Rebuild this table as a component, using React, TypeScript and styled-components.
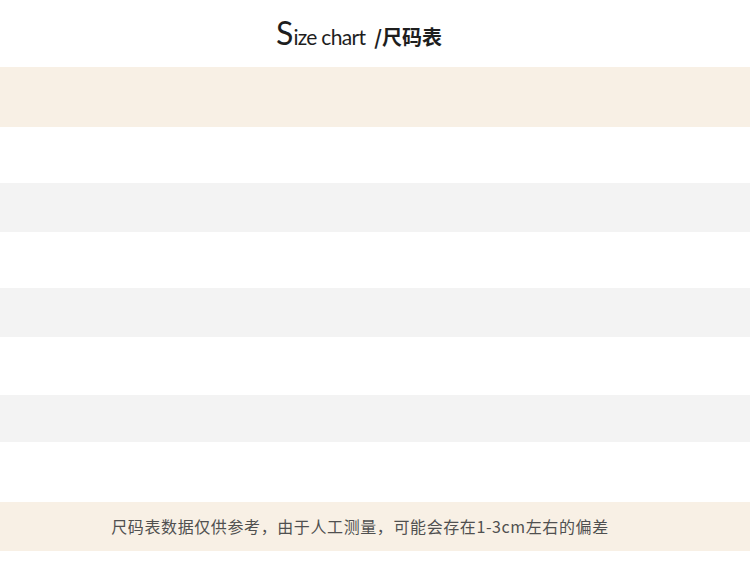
import React from "react";
import styled, { createGlobalStyle } from "styled-components";

const Global = createGlobalStyle`
  html, body { margin: 0; padding: 0; background: #ffffff; }
  body { width: 750px; height: 570px; overflow: hidden; }
`;

const Page = styled.div`
  width: 750px;
  height: 570px;
  display: flex;
  flex-direction: column;
  background: #ffffff;
`;

const TitleBar = styled.div`
  height: 67px;
  display: flex;
  align-items: center;
  justify-content: center;
  padding: 0 32px 2px 0;
  box-sizing: border-box;
`;

const Title = styled.h1`
  margin: 0;
  display: flex;
  align-items: baseline;
  color: #1e1e1e;
  font-weight: normal;
  line-height: 1;
`;

const BigS = styled.span`
  font-family: "Lato", "Open Sans", sans-serif;
  font-weight: 400;
  font-size: 32px;
`;

const Latin = styled.span`
  font-family: "Lato", "Open Sans", sans-serif;
  font-weight: 400;
  font-size: 21px;
  letter-spacing: -0.7px;
`;

const Cjk = styled.span`
  font-family: "Noto Sans CJK SC", sans-serif;
  font-weight: 700;
  font-size: 20px;
  margin-left: 9px;
`;

const Band = styled.div<{ $h: number; $tone: "beige" | "grey" | "white" }>`
  height: ${(p) => p.$h}px;
  flex: none;
  background: ${(p) =>
    p.$tone === "beige" ? "#f8f0e5" : p.$tone === "grey" ? "#f3f3f3" : "#ffffff"};
  display: flex;
  align-items: center;
  justify-content: center;
  padding-right: 30px;
`;

const Note = styled.p`
  margin: 0 0 1px 0;
  font-family: "Noto Sans CJK SC", sans-serif;
  font-size: 16px;
  letter-spacing: 0.6px;
  color: #505050;
`;

const rows: { h: number; tone: "beige" | "grey" | "white" }[] = [
  { h: 60, tone: "beige" },
  { h: 56, tone: "white" },
  { h: 49, tone: "grey" },
  { h: 56, tone: "white" },
  { h: 49, tone: "grey" },
  { h: 58, tone: "white" },
  { h: 47, tone: "grey" },
  { h: 60, tone: "white" },
];

export default function App() {
  return (
    <Page>
      <Global />
      <TitleBar>
        <Title>
          <BigS>S</BigS>
          <Latin>ize chart</Latin>
          <Cjk>/尺码表</Cjk>
        </Title>
      </TitleBar>
      {rows.map((r, i) => (
        <Band key={i} $h={r.h} $tone={r.tone} />
      ))}
      <Band $h={49} $tone="beige">
        <Note>尺码表数据仅供参考，由于人工测量，可能会存在1-3cm左右的偏差</Note>
      </Band>
    </Page>
  );
}
